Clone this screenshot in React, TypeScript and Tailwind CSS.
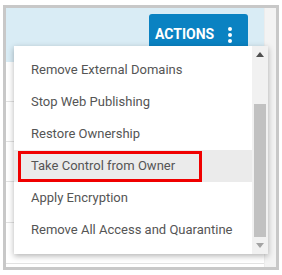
import React from "react";

const items = [
  "Remove External Domains",
  "Stop Web Publishing",
  "Restore Ownership",
  "Take Control from Owner",
  "Apply Encryption",
  "Remove All Access and Quarantine",
];

export default function App() {
  return (
    <div className="relative w-[282px] h-[275px] bg-white" style={{ fontFamily: "Roboto, 'Liberation Sans', sans-serif" }}>
      <div className="absolute left-[3px] top-[5px] w-[276px] h-[265px] border-[3px] border-[#c8c8c8] flex bg-white">
        <div className="flex-1 flex flex-col">
          <div className="h-[54px] bg-[#d9ecf5] flex justify-end pt-[6px] pr-[16px]">
            <div className="w-[99px] h-[48px] bg-[#0a82c2] rounded-t-[3px] flex items-start pt-[10px] pl-[6px]">
              <span className="text-[14px] font-bold text-white leading-[20px] tracking-[0px]">ACTIONS</span>
              <div className="ml-[14px] mt-[3px] flex flex-col gap-[2px]">
                <span className="block w-[4px] h-[4px] rounded-full bg-white"></span>
                <span className="block w-[4px] h-[4px] rounded-full bg-white"></span>
                <span className="block w-[4px] h-[4px] rounded-full bg-white"></span>
              </div>
            </div>
          </div>
          <div className="h-[40px] border-b border-[#e2e2e2]"></div>
          <div className="h-[40px] border-b border-[#e2e2e2]"></div>
          <div className="h-[40px] border-b border-[#e2e2e2]"></div>
          <div className="h-[41px] border-b border-[#e2e2e2]"></div>
          <div className="h-[41px] border-b border-[#e2e2e2]"></div>
          <div className="flex-1"></div>
        </div>
        <div className="w-[12px] bg-[#f3f3f3] border-l border-[#ececec]"></div>
      </div>

      <div className="absolute left-[14px] top-[46px] w-[254px] h-[208px] bg-white flex shadow-[0_2px_6px_rgba(0,0,0,0.3)]">
        <div className="flex-1 pt-[8px]">
          {items.map((t, i) => (
            <div
              key={t}
              className={
                i === 3
                  ? "relative h-[32px] flex items-center pl-[17px] bg-[#ebebeb] text-[13px] text-[#555555]"
                  : "relative h-[32px] flex items-center pl-[17px] text-[13px] text-[#555555]"
              }
            >
              {t}
              {i === 3 && (
                <div className="absolute left-[4px] top-[1px] w-[184px] h-[31px] border-[3px] border-[#f00000]"></div>
              )}
            </div>
          ))}
        </div>
        <div className="w-[16px] bg-[#f1f1f1] flex flex-col items-stretch">
          <div className="h-[17px] flex items-center justify-center">
            <svg width="8" height="5" viewBox="0 0 8 5"><polygon points="0,5 8,5 4,0" fill="#505050" /></svg>
          </div>
          <div className="h-[41px]"></div>
          <div className="h-[133px] mx-[2px] bg-[#c1c1c1]"></div>
          <div className="flex-1 flex items-center justify-center">
            <svg width="8" height="5" viewBox="0 0 8 5"><polygon points="0,0 8,0 4,5" fill="#a3a3a3" /></svg>
          </div>
        </div>
      </div>
    </div>
  );
}
